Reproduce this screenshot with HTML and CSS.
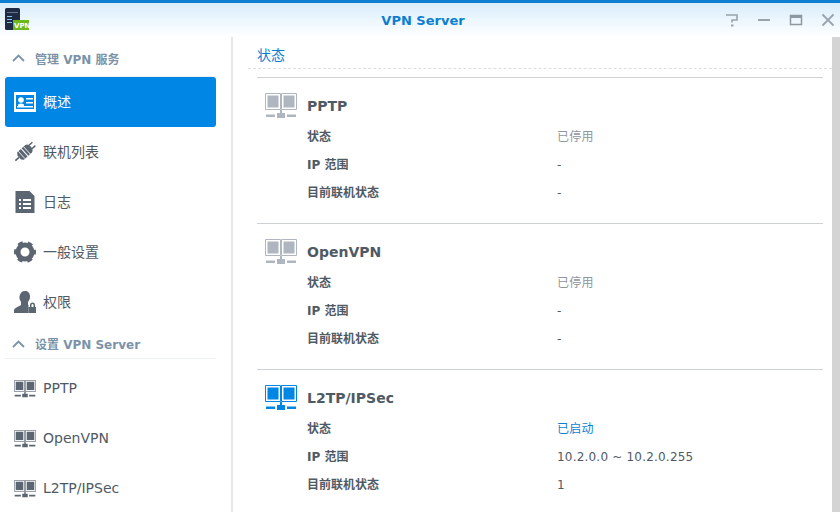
FILE: index.html
```html
<!DOCTYPE html>
<html lang="zh">
<head>
<meta charset="utf-8">
<title>VPN Server</title>
<link rel="stylesheet" href="styles.css">
</head>
<body>
<svg class="defs" width="0" height="0">
  <symbol id="net" viewBox="0 0 32 26">
    <path d="M.5.5h15v16H.5zM16.500.5h15v16h-15z" fill="none" stroke="currentColor"/>
    <path d="M2.500 2.500h11v12h-11zM18.500 2.500h11v12h-11z" fill="currentColor"/>
    <path d="M15 17h2v3h3v5h-8v-5h3zM1 21.500h9v2.500H1zM22 21.500h9v2.500h-9z" fill="currentColor"/>
  </symbol>
</svg>
<div class="window">
  <header class="titlebar">
    <svg class="app-icon" viewBox="0 0 26 26" width="26" height="26">
      <rect x="0" y="0" width="15" height="22" rx="1.500" fill="#1f2a44"/>
      <path d="M2 4h11v1H2z" fill="#66758c"/>
      <path d="M2 8h5v1H2zM2 11h5v1H2zM2 14h5v1H2z" fill="#7fc6e8"/>
      <rect x="8" y="12" width="16" height="10" fill="#6fb81c"/>
    </svg>
    <span class="app-badge">VPN</span>
    <h1 class="title">VPN Server</h1>
    <div class="controls">
      <svg class="ctl" width="14" height="14" viewBox="0 0 14 14"><path d="M1 2h11v5H7v2.500" fill="none" stroke="#9aa3ab" stroke-width="1.600"/><path d="M6 11.500h2.500V13.500H6z" fill="#9aa3ab"/></svg>
      <svg class="ctl" width="14" height="14" viewBox="0 0 14 14"><path d="M1 7h12" stroke="#9aa3ab" stroke-width="2"/></svg>
      <svg class="ctl" width="14" height="14" viewBox="0 0 14 14"><path d="M1.500 2.500h11v9h-11z" fill="none" stroke="#8f98a1" stroke-width="1.500"/><path d="M1 2h12v3H1z" fill="#8f98a1"/></svg>
      <svg class="ctl" width="14" height="14" viewBox="0 0 14 14"><path d="M1.500 1.500l11 11M12.500 1.500l-11 11" stroke="#9aa3ab" stroke-width="1.800"/></svg>
    </div>
  </header>
  <div class="body">
    <nav class="sidebar">
      <div class="group"><svg class="chev" width="13" height="8" viewBox="0 0 13 8"><path d="M1 7l5.500-5.500L12 7" fill="none" stroke="#7b93a8" stroke-width="1.800"/></svg>管理 VPN 服务</div>
      <a class="item active">
        <svg class="ico" width="22" height="20" viewBox="0 0 22 20"><path d="M0 0h22v20H0z" fill="#fff"/><path d="M2 3h18v14H2z" fill="#0086e5"/><circle cx="7" cy="8" r="2.800" fill="#fff"/><path d="M3 14h16v1.500H3zM12 6h7v1.500h-7zM12 10h7v1.500h-7zM4 12.500q3-2 6 0v1.500H4z" fill="#fff"/></svg>
        <span>概述</span></a>
      <a class="item">
        <svg class="ico" width="22" height="22" viewBox="0 0 22 22"><g transform="rotate(-42 11 11)" fill="#5c6672"><path d="M-2 10.200h5v1.600h-5zM18.500 8h4.500v1.500h-4.500zM18.500 12.500h4.500V14h-4.500z"/><path d="M3 8.500 5 6h5v10H5l-2-2z"/><path d="M11 6h5q3 1 3 5t-3 5h-5z"/><path d="M6.500 6v10M13.500 6v10" stroke="#fff" stroke-width=".8" fill="none"/></g></svg>
        <span>联机列表</span></a>
      <a class="item">
        <svg class="ico" width="22" height="22" viewBox="0 0 22 22"><path d="M1.500 0h14l5 5v17h-19z" fill="#5c6672"/><path d="M5 8h2v2H5zM9 8h8v2H9zM5 12h2v2H5zM9 12h8v2H9zM5 16h2v2H5zM9 16h8v2H9z" fill="#fff"/></svg>
        <span>日志</span></a>
      <a class="item">
        <svg class="ico" width="22" height="22" viewBox="0 0 22 22"><circle cx="11" cy="11" r="7" fill="none" stroke="#5c6672" stroke-width="5"/><circle cx="11" cy="11" r="9.500" fill="none" stroke="#5c6672" stroke-width="3" stroke-dasharray="5 4.950" stroke-dashoffset="2.500"/></svg>
        <span>一般设置</span></a>
      <a class="item">
        <svg class="ico" width="22" height="22" viewBox="0 0 22 22"><path d="M11 0c3 0 5 2 5 5.500S14.500 10 14 11v2.500l.5.500v8H0v-2.500c0-2.500 4-3.500 7-5.500v-3C6.500 10 5 8 5.500 5.500 6 2 8 0 11 0z" fill="#5c6672"/><path d="M16 16v-2a2.500 2.500 0 0 1 5 0v2h1v6h-7.500v-6z" fill="#5c6672"/><path d="M17.500 16v-2a1 1 0 0 1 2 0v2z" fill="#fff"/></svg>
        <span>权限</span></a>
      <div class="group second"><svg class="chev" width="13" height="8" viewBox="0 0 13 8"><path d="M1 7l5.500-5.500L12 7" fill="none" stroke="#7b93a8" stroke-width="1.800"/></svg>设置 VPN Server</div>
      <a class="item"><svg class="ico net-small"><use href="#net"/></svg><span>PPTP</span></a>
      <a class="item"><svg class="ico net-small"><use href="#net"/></svg><span>OpenVPN</span></a>
      <a class="item"><svg class="ico net-small"><use href="#net"/></svg><span>L2TP/IPSec</span></a>
    </nav>
    <main class="content">
      <div class="tab"><span>状态</span></div>
      <section class="panel">
        <div class="panel-head"><svg class="net-big off"><use href="#net"/></svg><h2>PPTP</h2></div>
        <dl class="rows">
          <dt>状态</dt><dd class="muted">已停用</dd>
          <dt>IP 范围</dt><dd class="num">-</dd>
          <dt>目前联机状态</dt><dd class="num">-</dd>
        </dl>
      </section>
      <section class="panel">
        <div class="panel-head"><svg class="net-big off"><use href="#net"/></svg><h2>OpenVPN</h2></div>
        <dl class="rows">
          <dt>状态</dt><dd class="muted">已停用</dd>
          <dt>IP 范围</dt><dd class="num">-</dd>
          <dt>目前联机状态</dt><dd class="num">-</dd>
        </dl>
      </section>
      <section class="panel">
        <div class="panel-head"><svg class="net-big on"><use href="#net"/></svg><h2>L2TP/IPSec</h2></div>
        <dl class="rows">
          <dt>状态</dt><dd class="on-text">已启动</dd>
          <dt>IP 范围</dt><dd class="num">10.2.0.0 ~ 10.2.0.255</dd>
          <dt>目前联机状态</dt><dd class="num">1</dd>
        </dl>
      </section>
    </main>
    <div class="gutter"></div>
  </div>
</div>
</body>
</html>
```
FILE: styles.css
```css
* { box-sizing: border-box; }
html, body { margin: 0; height: 100%; overflow: hidden; background: #fff; }
body { font-family: "DejaVu Sans", "Noto Sans CJK SC", sans-serif; font-size: 12px; color: #505a64; }
.defs { position: absolute; }
.window { height: 512px; display: flex; flex-direction: column; border-top: 3px solid #0c7fd3; }
.titlebar { position: relative; height: 34px; flex: none; display: flex; align-items: center; justify-content: center; padding-left: 6px; background: linear-gradient(#d9edfb, #fff); }
.app-icon { position: absolute; left: 5px; top: 5px; }
.app-badge { position: absolute; left: 14px; top: 19px; font-size: 7px; font-weight: 700; color: #fff; line-height: 9px; }
.title { margin: 0; font-size: 13px; font-weight: 700; color: #0c7fd3; }
.controls { position: absolute; right: 5px; top: 10px; display: flex; align-items: center; gap: 18px; }
.ctl { display: block; }
.body { flex: 1; display: flex; min-height: 0; }
.sidebar { width: 233px; flex: none; padding: 0 15px 0 5px; border-right: 2px solid #e4e6e8; overflow: hidden; }
.group { height: 40px; display: flex; align-items: center; gap: 10px; padding: 3px 0 0 7px; font-size: 12px; font-weight: 700; color: #7b93a8; border-bottom: 1px solid #eef1f3; }
.group.second { height: 32px; padding-top: 2px; margin-bottom: 5px; }
.item { height: 50px; display: flex; align-items: center; gap: 7px; padding-left: 9px; font-size: 14px; color: #505a64; }
.item span { position: relative; top: -1px; }
.item.active { background: #0086e5; color: #fff; border-radius: 3px; }
.ico { width: 22px; flex: none; display: block; color: #5c6672; }
.net-small { height: 18px; }
.content { flex: 1; min-width: 0; padding-left: 15px; overflow: hidden; }
.tab { height: 32px; padding: 9px 0 0 9px; font-size: 14px; line-height: 18px; color: #0c7fd3; border-bottom: 1px dashed #dcdfe2; }
.panel { margin: 0 9px; border-top: 1px solid #cfd2d5; height: 146px; padding-top: 15px; }
.tab + .panel { margin-top: 8px; }
.panel-head { display: flex; align-items: center; gap: 10px; height: 26px; padding-left: 8px; }
.panel-head h2 { margin: 0; font-size: 14px; font-weight: 700; color: #505a64; }
.net-big { width: 32px; height: 26px; display: block; }
.net-big.off { color: #b0b6bf; }
.net-big.on { color: #0086e5; }
.rows { display: grid; grid-template-columns: 250px 1fr; margin: 2px 0 0 50px; grid-auto-rows: 28px; align-items: center; }
.rows dt { font-weight: 700; font-size: 12px; }
.rows dd { margin: 0; font-size: 12px; letter-spacing: .2px; }
.rows dd.num { padding-top: 3px; }
.muted { color: #8e959c; }
.on-text { color: #0c7fd3; }
.gutter { width: 8px; flex: none; background: #d4d4d4; }
```
